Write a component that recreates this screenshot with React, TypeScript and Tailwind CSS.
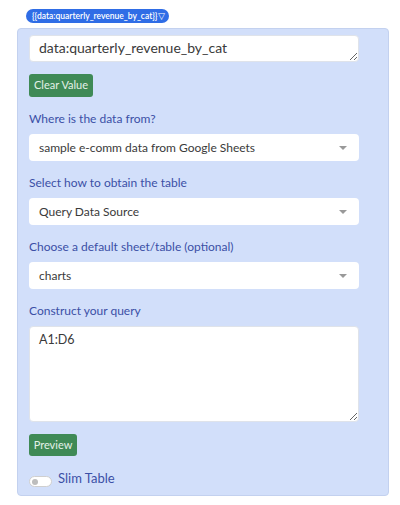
import { useState } from "react";

const font = { fontFamily: "Lato, 'Open Sans', sans-serif" };

function Caret() {
  return (
    <svg width="8" height="4" viewBox="0 0 8 4" className="shrink-0">
      <path d="M0 0 L8 0 L4 4 Z" fill="#999999" />
    </svg>
  );
}

function Select({ value }: { value: string }) {
  return (
    <div className="flex h-[27px] w-[330px] items-center justify-between rounded-[4px] bg-white pl-[10px] pr-[12px] text-[12px] text-[#3a3a3a]">
      <span>{value}</span>
      <Caret />
    </div>
  );
}

function Label({ children }: { children: React.ReactNode }) {
  return <div className="mt-[12px] mb-[5px] h-[20px] text-[12px] leading-[20px] text-[#3b4fa6]">{children}</div>;
}

export default function App() {
  const [slim, setSlim] = useState(false);

  return (
    <div className="h-[505px] w-[400px] bg-white pt-[9px]" style={font}>
      <div className="ml-[26px] flex h-[14px] w-fit items-center rounded-full bg-[#2f6de6] pl-[6px] pr-[4px] text-[8.5px] font-semibold leading-none text-white">
        {"{{data:quarterly_revenue_by_cat}}"}
        <span className="ml-[1px] font-normal">▽</span>
      </div>

      {/* card */}
      <div className="mt-[5px] ml-[17px] h-[468px] w-[372px] rounded-[4px] border border-[#c3d1ef] bg-[#d2dffa] pl-[11px] pt-[6px]">
        <textarea
          readOnly
          defaultValue="data:quarterly_revenue_by_cat"
          className="block h-[27px] w-[330px] resize-y overflow-hidden rounded-[4px] border border-[#dfe3ea] bg-white px-[9px] py-[2px] text-[14px] leading-[20px] text-[#3a3a3a] outline-none"
        />

        <button className="mt-[12px] h-[23px] w-[64px] rounded-[3px] bg-[#3f8a56] text-[11px] text-[#e4f1e8]">
          Clear Value
        </button>

        <Label>Where is the data from?</Label>
        <Select value="sample e-comm data from Google Sheets" />

        <Label>Select how to obtain the table</Label>
        <Select value="Query Data Source" />

        <Label>Choose a default sheet/table (optional)</Label>
        <Select value="charts" />

        <Label>Construct your query</Label>
        <textarea
          readOnly
          defaultValue="A1:D6"
          className="block h-[96px] w-[330px] resize-y rounded-[4px] border border-[#dfe3ea] bg-white px-[9px] py-[3px] text-[12.5px] leading-[19px] text-[#3a3a3a] outline-none"
        />

        <button className="mt-[12px] h-[22px] w-[48px] rounded-[3px] bg-[#3f8a56] text-[11px] text-[#e4f1e8]">
          Preview
        </button>

        <div className="mt-[13px] flex items-center gap-[6px]">
          <button
            onClick={() => setSlim(!slim)}
            className="relative mt-[5px] h-[11px] w-[23px] rounded-full border border-[#cfcfcf] bg-white"
          >
            <span className="absolute left-[2px] top-[2px] h-[6px] w-[6px] rounded-full bg-[#bdbdbd]" />
          </button>
          <span className="text-[13px] text-[#3b4fa6]">Slim Table</span>
        </div>
      </div>
    </div>
  );
}
